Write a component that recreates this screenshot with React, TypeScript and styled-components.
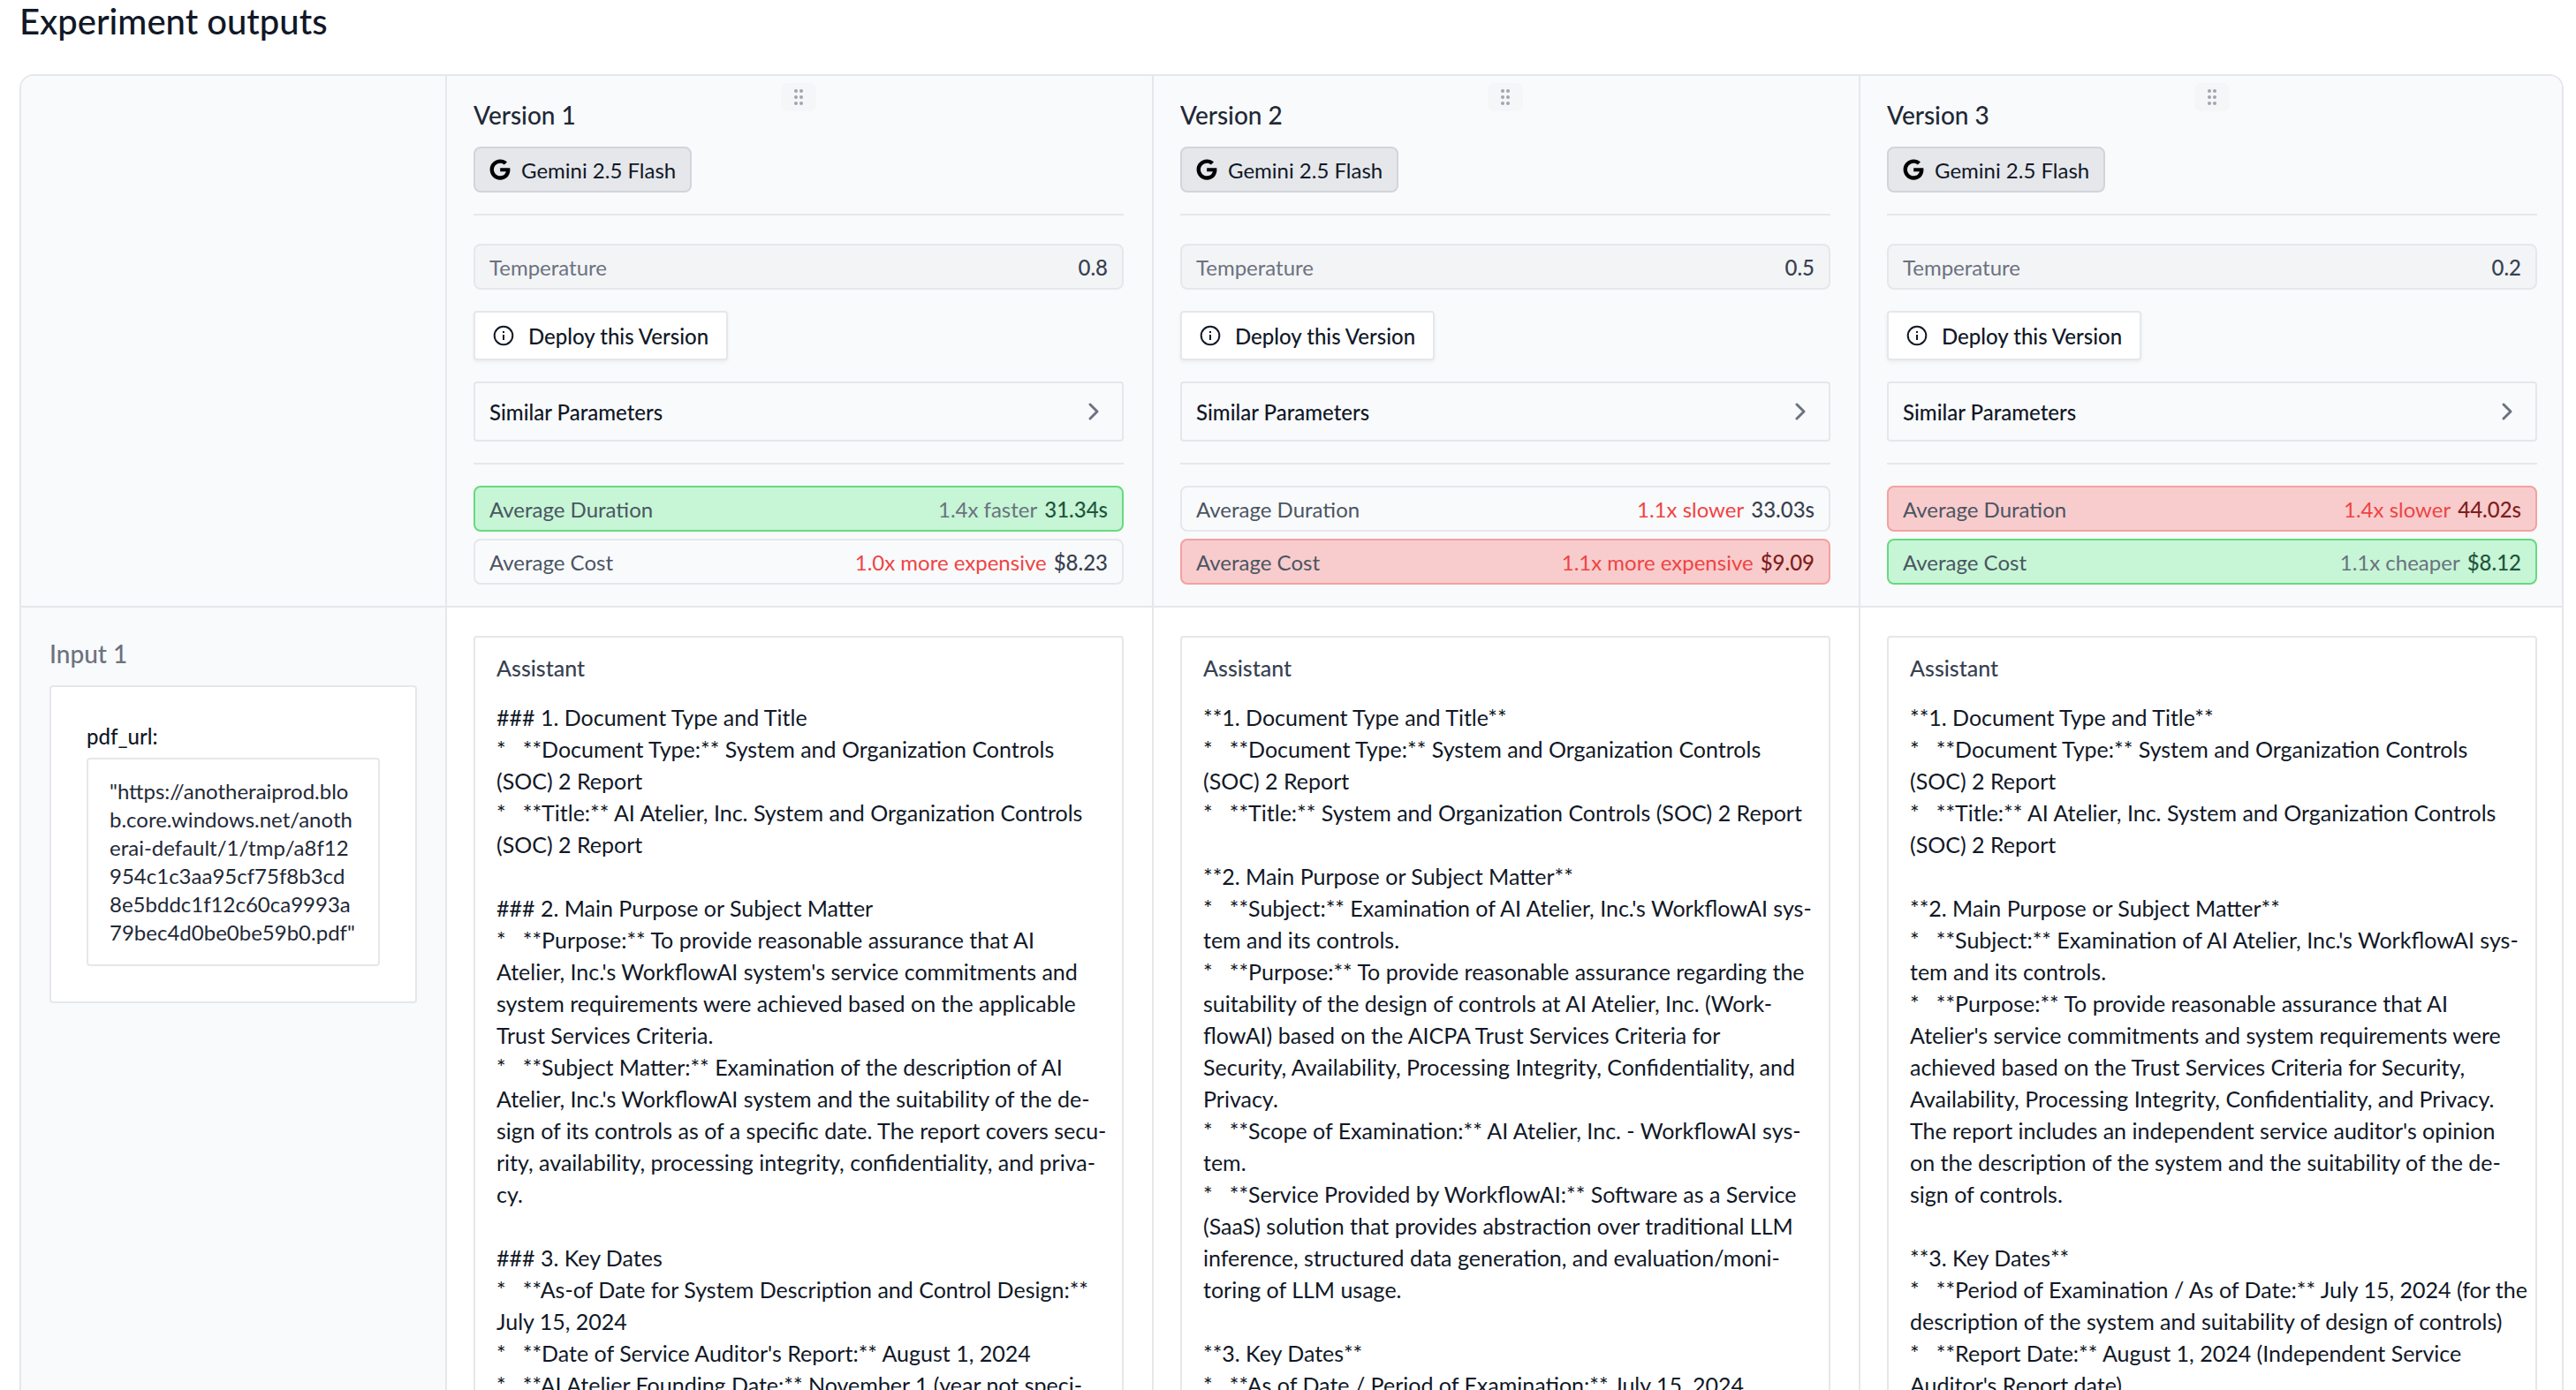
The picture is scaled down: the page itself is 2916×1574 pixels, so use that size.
import React from "react";
import styled, { createGlobalStyle } from "styled-components";
import { FaGoogle } from "react-icons/fa";

const GlobalStyle = createGlobalStyle`
  *, *::before, *::after { box-sizing: border-box; }
  body { margin: 0; background: #ffffff; color: #111827; font-family: Lato, "Liberation Sans", sans-serif; font-size: 24px; }
  h1, h2, h3, p { margin: 0; font: inherit; }
  button { font: inherit; color: inherit; cursor: pointer; }
`;

const Page = styled.main`
  padding: 0 14px 0 22px;
`;

const Title = styled.h1`
  && { font-size: 40px; font-weight: 500; line-height: 48px; margin-bottom: 36px; color: #111827; }
`;

const Board = styled.section`
  display: grid;
  grid-template-columns: 480px 400fr 400fr 398fr;
  border: 2px solid #e5e7eb;
  border-bottom: 0;
  border-radius: 16px 16px 0 0;
  overflow: hidden;
`;

const EmptyCell = styled.div`
  border-bottom: 2px solid #e5e7eb;
  background: #f9fafb;
`;

const HeadCell = styled.div`
  padding: 28px 32px 24px 30px;
  border-left: 2px solid #e5e7eb;
  border-bottom: 2px solid #e5e7eb;
  background: #f9fafb;
  &:nth-child(4n) { padding-right: 28px; }
`;

const HeadBody = styled.div`
  position: relative;
`;

const InputCell = styled.div`
  padding: 32px;
  background: #f9fafb;
`;

const OutputCell = styled.div`
  padding: 32px 32px 32px 30px;
  border-left: 2px solid #e5e7eb;
  &:nth-child(4n) { padding-right: 28px; }
`;

const Handle = styled.button`
  position: absolute;
  top: -20px;
  left: 50%;
  transform: translateX(-50%);
  display: flex;
  align-items: center;
  justify-content: center;
  width: 40px;
  height: 32px;
  padding: 0;
  border: 0;
  border-radius: 8px;
  background: #f5f6f8;
`;

const VersionName = styled.h2`
  && { font-size: 28px; font-weight: 500; line-height: 32px; color: #1f2937; }
`;

const ModelTag = styled.span`
  display: inline-flex;
  align-items: center;
  gap: 12px;
  height: 52px;
  margin-top: 20px;
  padding: 0 16px;
  border: 2px solid #d1d5db;
  border-radius: 8px;
  background: #e5e7eb;
  vertical-align: top;
`;

const Rule = styled.hr<{ $below: number }>`
  height: 2px;
  margin: 24px 0 ${(p) => p.$below}px;
  border: 0;
  background: #e5e7eb;
`;

type Tone = "plain" | "muted" | "good" | "bad";

const fills: Record<Tone, string> = { plain: "#f9fafb", muted: "#f3f4f6", good: "#c6f6d5", bad: "#f8cccc" };
const edges: Record<Tone, string> = { plain: "#e5e7eb", muted: "#e5e7eb", good: "#68d981", bad: "#f3a1a1" };
const inks: Record<Tone, string> = { plain: "#374151", muted: "#374151", good: "#22543d", bad: "#7f1d1d" };

const Metric = styled.div<{ $tone: Tone }>`
  display: flex;
  align-items: center;
  justify-content: space-between;
  height: 52px;
  padding: 0 16px;
  border: 2px solid ${(p) => edges[p.$tone]};
  border-radius: 8px;
  background: ${(p) => fills[p.$tone]};
`;

const MetricLabel = styled.span<{ $soft?: boolean }>`
  color: ${(p) => (p.$soft ? "#6b7280" : "#4b5563")};
`;

const MetricValue = styled.span<{ $tone: Tone }>`
  display: flex;
  gap: 8px;
  font-weight: 500;
  color: ${(p) => inks[p.$tone]};
`;

const Change = styled.span<{ $worse: boolean }>`
  font-weight: 400;
  color: ${(p) => (p.$worse ? "#ef4444" : "#6b7280")};
`;

const Metrics = styled.div`
  display: grid;
  gap: 8px;
`;

const DeployButton = styled.button`
  display: flex;
  align-items: center;
  gap: 16px;
  height: 56px;
  margin: 24px 0;
  padding: 0 20px;
  border: 2px solid #e5e7eb;
  border-radius: 4px;
  background: #ffffff;
  box-shadow: 0 2px 4px rgba(0, 0, 0, 0.06);
  && { font-weight: 500; }
`;

const ParametersButton = styled.button`
  display: flex;
  align-items: center;
  justify-content: space-between;
  width: 100%;
  height: 68px;
  padding: 0 20px 0 16px;
  border: 2px solid #e5e7eb;
  border-radius: 4px;
  background: transparent;
  && { font-weight: 500; }
`;

const InputTitle = styled.h2`
  && { font-size: 28px; font-weight: 500; line-height: 40px; color: #6b7280; }
`;

const InputCard = styled.div`
  margin-top: 16px;
  padding: 40px;
  border: 2px solid #e5e7eb;
  border-radius: 4px;
  background: #ffffff;
`;

const FieldName = styled.h3`
  && { font-weight: 500; line-height: 32px; margin-bottom: 8px; }
`;

const FieldValue = styled.p`
  && {
    padding: 20px 24px;
    border: 2px solid #e5e7eb;
    border-radius: 4px;
    line-height: 32px;
    color: #1f2937;
    word-break: break-all;
  }
`;

const OutputCard = styled.article`
  padding: 16px 8px 16px 24px;
  border: 2px solid #e5e7eb;
  border-radius: 4px;
  background: #ffffff;
  font-size: 25px;
`;

const Role = styled.h3`
  && { font-weight: 500; line-height: 36px; margin-bottom: 20px; color: #374151; }
`;

const Message = styled.p`
  && { line-height: 36px; white-space: pre-wrap; overflow-wrap: break-word; text-rendering: optimizeLegibility; }
`;

const GripIcon = () => (
  <svg width="12" height="20" viewBox="0 0 12 20" fill="#a1a5b0" aria-hidden="true">
    {[3, 10, 17].map((y) => (
      <React.Fragment key={y}>
        <circle cx="3" cy={y} r="2" />
        <circle cx="9" cy={y} r="2" />
      </React.Fragment>
    ))}
  </svg>
);

const InfoIcon = () => (
  <svg width="24" height="24" viewBox="0 0 24 24" fill="none" stroke="#111827" strokeWidth="2" aria-hidden="true">
    <circle cx="12" cy="12" r="10.3" />
    <path d="M12 11v6" />
    <path d="M12 7v2" />
  </svg>
);

const ChevronIcon = () => (
  <svg width="24" height="24" viewBox="0 0 24 24" fill="none" stroke="#6b7280" strokeWidth="3" strokeLinecap="round" strokeLinejoin="round" aria-hidden="true">
    <path d="M8 4l8 8-8 8" />
  </svg>
);

type Stat = { tone: Tone; change: string; worse: boolean; value: string };
type Version = { name: string; temperature: string; duration: Stat; cost: Stat; output: string };

const versions: Version[] = [
  {
    name: "Version 1",
    temperature: "0.8",
    duration: { tone: "good", change: "1.4x faster", worse: false, value: "31.34s" },
    cost: { tone: "plain", change: "1.0x more expensive", worse: true, value: "$8.23" },
    output: `### 1. Document Type and Title
*   **Document Type:** System and Organization Controls
(SOC) 2 Report
*   **Title:** AI Atelier, Inc. System and Organization Controls
(SOC) 2 Report

### 2. Main Purpose or Subject Matter
*   **Purpose:** To provide reasonable assurance that AI
Atelier, Inc.'s WorkflowAI system's service commitments and
system requirements were achieved based on the applicable
Trust Services Criteria.
*   **Subject Matter:** Examination of the description of AI
Atelier, Inc.'s WorkflowAI system and the suitability of the de-
sign of its controls as of a specific date. The report covers secu-
rity, availability, processing integrity, confidentiality, and priva-
cy.

### 3. Key Dates
*   **As-of Date for System Description and Control Design:**
July 15, 2024
*   **Date of Service Auditor's Report:** August 1, 2024
*   **AI Atelier Founding Date:** November 1 (year not speci-`,
  },
  {
    name: "Version 2",
    temperature: "0.5",
    duration: { tone: "plain", change: "1.1x slower", worse: true, value: "33.03s" },
    cost: { tone: "bad", change: "1.1x more expensive", worse: true, value: "$9.09" },
    output: `**1. Document Type and Title**
*   **Document Type:** System and Organization Controls
(SOC) 2 Report
*   **Title:** System and Organization Controls (SOC) 2 Report

**2. Main Purpose or Subject Matter**
*   **Subject:** Examination of AI Atelier, Inc.'s WorkflowAI sys-
tem and its controls.
*   **Purpose:** To provide reasonable assurance regarding the
suitability of the design of controls at AI Atelier, Inc. (Work-
flowAI) based on the AICPA Trust Services Criteria for
Security, Availability, Processing Integrity, Confidentiality, and
Privacy.
*   **Scope of Examination:** AI Atelier, Inc. - WorkflowAI sys-
tem.
*   **Service Provided by WorkflowAI:** Software as a Service
(SaaS) solution that provides abstraction over traditional LLM
inference, structured data generation, and evaluation/moni-
toring of LLM usage.

**3. Key Dates**
*   **As of Date / Period of Examination:** July 15, 2024`,
  },
  {
    name: "Version 3",
    temperature: "0.2",
    duration: { tone: "bad", change: "1.4x slower", worse: true, value: "44.02s" },
    cost: { tone: "good", change: "1.1x cheaper", worse: false, value: "$8.12" },
    output: `**1. Document Type and Title**
*   **Document Type:** System and Organization Controls
(SOC) 2 Report
*   **Title:** AI Atelier, Inc. System and Organization Controls
(SOC) 2 Report

**2. Main Purpose or Subject Matter**
*   **Subject:** Examination of AI Atelier, Inc.'s WorkflowAI sys-
tem and its controls.
*   **Purpose:** To provide reasonable assurance that AI
Atelier's service commitments and system requirements were
achieved based on the Trust Services Criteria for Security,
Availability, Processing Integrity, Confidentiality, and Privacy.
The report includes an independent service auditor's opinion
on the description of the system and the suitability of the de-
sign of controls.

**3. Key Dates**
*   **Period of Examination / As of Date:** July 15, 2024 (for the
description of the system and suitability of design of controls)
*   **Report Date:** August 1, 2024 (Independent Service
Auditor's Report date)`,
  },
];

const StatRow = ({ label, stat }: { label: string; stat: Stat }) => (
  <Metric $tone={stat.tone}>
    <MetricLabel>{label}</MetricLabel>
    <MetricValue $tone={stat.tone}>
      <Change $worse={stat.worse}>{stat.change}</Change>
      {stat.value}
    </MetricValue>
  </Metric>
);

const VersionHead = ({ version }: { version: Version }) => (
  <HeadCell>
    <HeadBody>
      <Handle aria-label={`Move ${version.name}`}>
        <GripIcon />
      </Handle>
      <VersionName>{version.name}</VersionName>
      <ModelTag>
        <FaGoogle size={24} color="#000000" aria-hidden="true" />
        Gemini 2.5 Flash
      </ModelTag>
      <Rule $below={32} />
      <Metric $tone="muted">
        <MetricLabel $soft>Temperature</MetricLabel>
        <MetricValue $tone="muted">{version.temperature}</MetricValue>
      </Metric>
      <DeployButton>
        <InfoIcon />
        Deploy this Version
      </DeployButton>
      <ParametersButton aria-expanded={false}>
        Similar Parameters
        <ChevronIcon />
      </ParametersButton>
      <Rule $below={24} />
      <Metrics>
        <StatRow label="Average Duration" stat={version.duration} />
        <StatRow label="Average Cost" stat={version.cost} />
      </Metrics>
    </HeadBody>
  </HeadCell>
);

export default function App() {
  return (
    <>
      <GlobalStyle />
      <Page>
        <Title>Experiment outputs</Title>
        <Board>
          <EmptyCell />
          {versions.map((v) => (
            <VersionHead key={v.name} version={v} />
          ))}
          <InputCell>
            <InputTitle>Input 1</InputTitle>
            <InputCard>
              <FieldName>pdf_url:</FieldName>
              <FieldValue>"https://anotheraiprod.blob.core.windows.net/anotherai-default/1/tmp/a8f12954c1c3aa95cf75f8b3cd8e5bddc1f12c60ca9993a79bec4d0be0be59b0.pdf"</FieldValue>
            </InputCard>
          </InputCell>
          {versions.map((v) => (
            <OutputCell key={v.name}>
              <OutputCard>
                <Role>Assistant</Role>
                <Message>{v.output}</Message>
              </OutputCard>
            </OutputCell>
          ))}
        </Board>
      </Page>
    </>
  );
}
